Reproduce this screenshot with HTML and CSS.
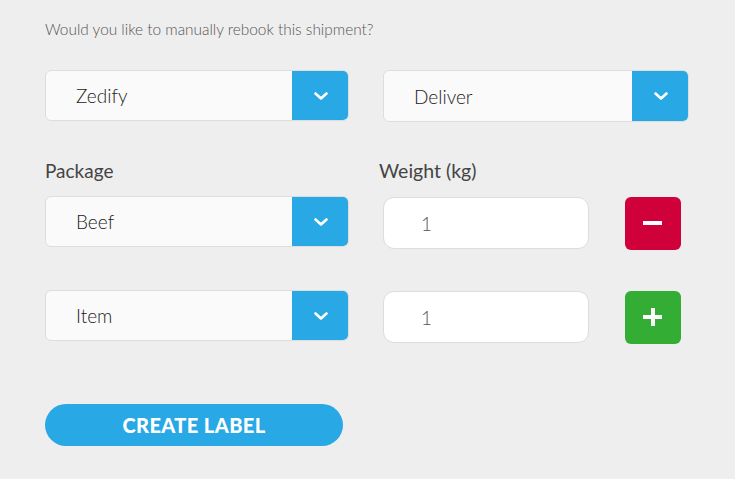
FILE: index.html
```html
<!DOCTYPE html>
<html>
<head>
<meta charset="utf-8">
<link rel="stylesheet" href="styles.css">
</head>
<body>
<div class="page">
  <p class="question">Would you like to manually rebook this shipment?</p>
  <div class="grid">
    <div class="select"><span class="val">Zedify</span><span class="arrow"><svg width="14" height="8" viewBox="0 0 14 8"><path d="M1.5 1.5 L7 6.5 L12.5 1.5" fill="none" stroke="#fff" stroke-width="2.6" stroke-linecap="round" stroke-linejoin="round"/></svg></span></div>
    <div class="select sel2"><span class="val">Deliver</span><span class="arrow"><svg width="14" height="8" viewBox="0 0 14 8"><path d="M1.5 1.5 L7 6.5 L12.5 1.5" fill="none" stroke="#fff" stroke-width="2.6" stroke-linecap="round" stroke-linejoin="round"/></svg></span></div>

    <div class="label">Package</div>
    <div class="label wlabel">Weight (kg)</div>

    <div class="select"><span class="val">Beef</span><span class="arrow"><svg width="14" height="8" viewBox="0 0 14 8"><path d="M1.5 1.5 L7 6.5 L12.5 1.5" fill="none" stroke="#fff" stroke-width="2.6" stroke-linecap="round" stroke-linejoin="round"/></svg></span></div>
    <div class="wrow">
      <div class="input">1</div>
      <div class="btn minus"><span class="bar"></span></div>
    </div>

    <div class="select row4"><span class="val">Item</span><span class="arrow"><svg width="14" height="8" viewBox="0 0 14 8"><path d="M1.5 1.5 L7 6.5 L12.5 1.5" fill="none" stroke="#fff" stroke-width="2.6" stroke-linecap="round" stroke-linejoin="round"/></svg></span></div>
    <div class="wrow row4">
      <div class="input">1</div>
      <div class="btn plus"><span class="bar"></span><span class="bar vbar"></span></div>
    </div>
  </div>
  <div class="create">CREATE LABEL</div>
</div>
</body>
</html>
```
FILE: styles.css
```css
html, body {
  margin: 0;
  padding: 0;
  background: #eeeeee;
}
.page {
  padding: 19px 0 0 45px;
  font-family: "Lato", "DejaVu Sans", sans-serif;
}
.question {
  margin: 0;
  font-size: 15.4px;
  font-weight: 300;
  color: #555;
  line-height: 21px;
}
.grid {
  margin-top: 30px;
  display: grid;
  grid-template-columns: 304px 306px;
  column-gap: 34px;
  align-items: start;
}
.select {
  height: 51px;
  box-sizing: border-box;
  display: flex;
  border: 1px solid #dddddd;
  border-radius: 6px;
  background: #fafafa;
  overflow: hidden;
}
.sel2 {
  height: 52px;
}
.select .val {
  flex: 1;
  display: flex;
  align-items: center;
  padding-left: 30px;
  font-size: 19px;
  font-weight: 300;
  color: #222;
}
.select .arrow {
  width: 57px;
  background: #29a8e6;
  display: flex;
  align-items: center;
  justify-content: center;
  margin: -1px -1px -1px 0;
}
.label {
  margin-top: 36px;
  height: 26px;
  font-size: 19px;
  font-weight: 400;
  color: #444;
  line-height: 26px;
  margin-bottom: 12px;
}
.wlabel {
  margin-left: -4px;
  font-size: 19.5px;
}
.wrow {
  display: flex;
  align-items: flex-start;
  gap: 36px;
  padding-top: 1px;
}
.row4 {
  margin-top: 40px;
}
.input {
  width: 206px;
  height: 52px;
  box-sizing: border-box;
  background: #fff;
  border: 1px solid #dddddd;
  border-radius: 11px;
  padding-left: 37px;
  display: flex;
  align-items: center;
  font-size: 19px;
  font-weight: 300;
  color: #555;
}
.btn {
  width: 56px;
  height: 53px;
  border-radius: 6px;
  position: relative;
}
.minus { background: #cf003a; }
.plus { background: #33ad33; }
.bar {
  position: absolute;
  left: 18px;
  top: 24px;
  width: 19px;
  height: 4px;
  background: #fff;
}
.vbar {
  left: 26px;
  top: 17px;
  width: 4px;
  height: 18px;
}
.create {
  margin-top: 60px;
  width: 298px;
  height: 42px;
  border-radius: 21px;
  background: #29a8e6;
  color: #fff;
  font-weight: 900;
  font-size: 20px;
  display: flex;
  align-items: center;
  justify-content: center;
  letter-spacing: 0.4px;
}
```
